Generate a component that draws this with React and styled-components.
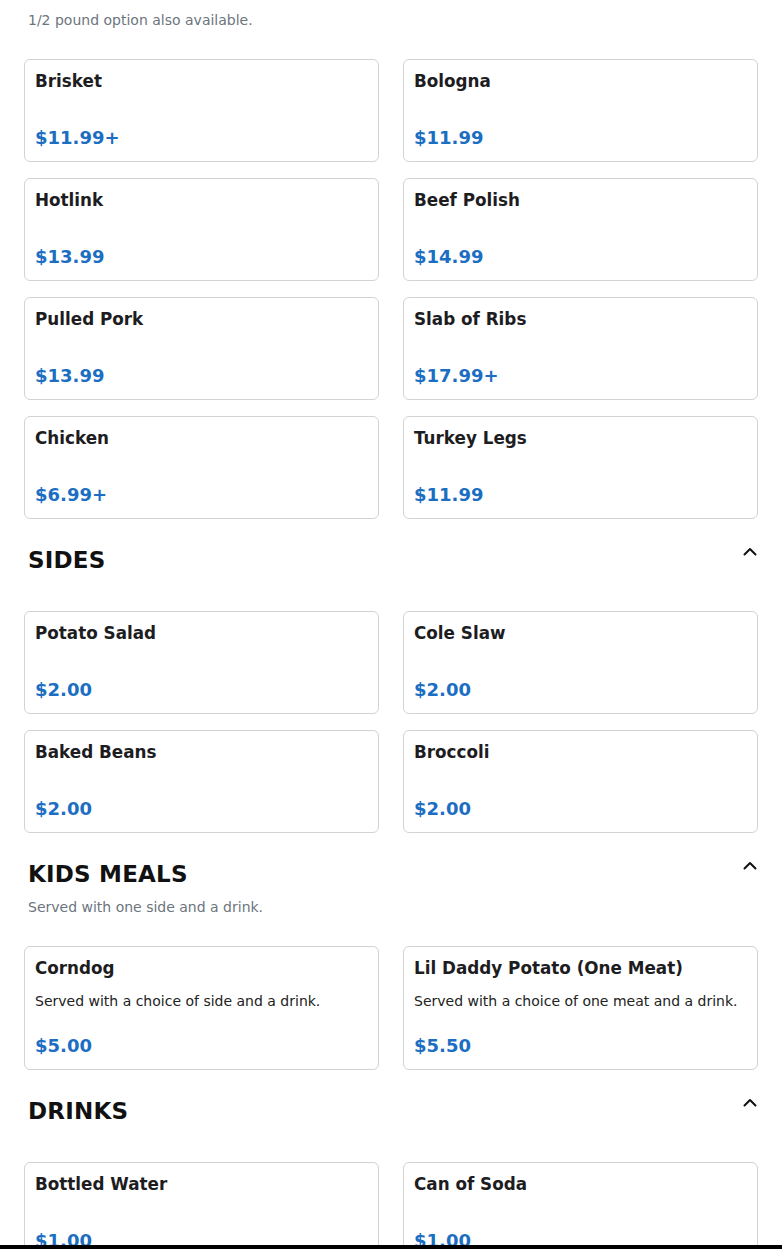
import React from "react";
import styled, { createGlobalStyle } from "styled-components";

const GlobalStyle = createGlobalStyle`
  html, body {
    margin: 0;
    padding: 0;
    background: #fff;
  }
  body {
    font-family: "DejaVu Sans", "Liberation Sans", sans-serif;
    color: #212529;
  }
`;

const Page = styled.main`
  padding: 10px 24px 40px;
`;

const Section = styled.section`
  & + & {
    margin-top: 27px;
  }
`;

const SectionHeader = styled.header`
  padding: 0 1px 28px 4px;
`;

const HeaderRow = styled.div`
  display: flex;
  justify-content: space-between;
  align-items: flex-start;
  margin-bottom: 9px;

  & + p {
    margin-top: 1px;
  }
`;

const Heading = styled.h2`
  margin: 0;
  font-size: 23px;
  line-height: 28px;
  font-weight: bold;
  color: #111;
  letter-spacing: 0.2px;
`;

const Toggle = styled.button`
  border: 0;
  background: none;
  padding: 0;
  margin-top: 1px;
  width: 14px;
  height: 9px;
  display: flex;
  cursor: pointer;
`;

const SectionNote = styled.p`
  margin: 0;
  font-size: 14px;
  line-height: 21px;
  color: #6c757d;
`;

const Grid = styled.div`
  display: grid;
  grid-template-columns: 1fr 1fr;
  column-gap: 24px;
  row-gap: 16px;
`;

const Card = styled.article`
  border: 1px solid #d3d3d3;
  border-radius: 6px;
  padding: 11px 10px 12px;
  display: flex;
  flex-direction: column;
  background: #fff;
`;

const ItemName = styled.h3`
  margin: 0 0 ${(p) => (p.$hasNote ? "13px" : "36px")};
  font-size: 16.8px;
  line-height: 20px;
  font-weight: bold;
  color: #1d1d1f;
`;

const ItemNote = styled.p`
  margin: 0 0 23px;
  font-size: 14px;
  line-height: 21px;
  color: #222;
`;

const Price = styled.div`
  font-size: 18px;
  line-height: 22px;
  font-weight: bold;
  color: #1b6ec2;
`;

const BottomBar = styled.div`
  position: fixed;
  left: 0;
  right: 0;
  bottom: 0;
  height: 4px;
  background: #000;
`;

const Chevron = () => (
  <svg width="14" height="9" viewBox="0 0 14 9" fill="none">
    <polyline
      points="1.5,7.5 7,2 12.5,7.5"
      stroke="#111"
      strokeWidth="2"
      strokeLinecap="round"
      strokeLinejoin="round"
    />
  </svg>
);

const sections = [
  {
    title: null,
    note: "1/2 pound option also available.",
    items: [
      { name: "Brisket", price: "$11.99+" },
      { name: "Bologna", price: "$11.99" },
      { name: "Hotlink", price: "$13.99" },
      { name: "Beef Polish", price: "$14.99" },
      { name: "Pulled Pork", price: "$13.99" },
      { name: "Slab of Ribs", price: "$17.99+" },
      { name: "Chicken", price: "$6.99+" },
      { name: "Turkey Legs", price: "$11.99" },
    ],
  },
  {
    title: "SIDES",
    items: [
      { name: "Potato Salad", price: "$2.00" },
      { name: "Cole Slaw", price: "$2.00" },
      { name: "Baked Beans", price: "$2.00" },
      { name: "Broccoli", price: "$2.00" },
    ],
  },
  {
    title: "KIDS MEALS",
    note: "Served with one side and a drink.",
    items: [
      {
        name: "Corndog",
        note: "Served with a choice of side and a drink.",
        price: "$5.00",
      },
      {
        name: "Lil Daddy Potato (One Meat)",
        note: "Served with a choice of one meat and a drink.",
        price: "$5.50",
      },
    ],
  },
  {
    title: "DRINKS",
    items: [
      { name: "Bottled Water", price: "$1.00" },
      { name: "Can of Soda", price: "$1.00" },
    ],
  },
];

const MenuCard = ({ item }) => (
  <Card>
    <ItemName $hasNote={!!item.note}>{item.name}</ItemName>
    {item.note && <ItemNote>{item.note}</ItemNote>}
    <Price>{item.price}</Price>
  </Card>
);

export default function App() {
  return (
    <>
      <GlobalStyle />
      <Page>
        {sections.map((s, i) => (
          <Section key={i}>
            <SectionHeader>
              {s.title && (
                <HeaderRow>
                  <Heading>{s.title}</Heading>
                  <Toggle aria-label="Collapse section">
                    <Chevron />
                  </Toggle>
                </HeaderRow>
              )}
              {s.note && <SectionNote>{s.note}</SectionNote>}
            </SectionHeader>
            <Grid>
              {s.items.map((item) => (
                <MenuCard key={item.name} item={item} />
              ))}
            </Grid>
          </Section>
        ))}
      </Page>
      <BottomBar />
    </>
  );
}
